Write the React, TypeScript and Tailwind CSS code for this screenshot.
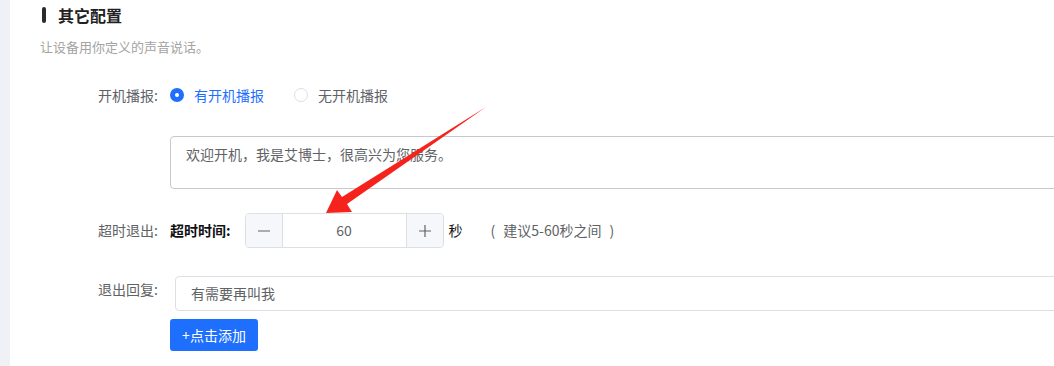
import React from "react";

export default function App() {
  return (
    <div
      className="relative flex h-[366px] w-[1054px] overflow-hidden bg-white text-[14px] text-[#606266]"
      style={{ fontFamily: '"Noto Sans CJK SC", "Noto Sans", sans-serif' }}
    >
      <div className="h-full w-[10px] shrink-0 bg-[#f0f1f6]" />
      <div className="flex flex-1 flex-col pl-[30px] pt-[4px]">
        {/* title */}
        <div className="flex h-[22px] items-center">
          <div className="ml-[2px] h-[16px] w-[4px] rounded-[2px] bg-[#2b2b2b]" />
          <div className="ml-[12px] text-[16px] font-bold leading-[22px] text-[#222]">其它配置</div>
        </div>
        <div className="mt-[11px] text-[13px] leading-[20px] text-[#a3a3a3]">让设备用你定义的声音说话。</div>

        {/* radio row */}
        <div className="mt-[28px] flex h-[20px] items-center">
          <div className="w-[130px] shrink-0 pr-[12px] text-right leading-[20px]">开机播报:</div>
          <div className="flex items-center">
            <span className="flex h-[14px] w-[14px] items-center justify-center rounded-full bg-[#1f6fff]">
              <span className="h-[4px] w-[4px] rounded-full bg-white" />
            </span>
            <span className="ml-[10px] leading-[20px] text-[#1f6fff]">有开机播报</span>
            <span className="ml-[30px] h-[14px] w-[14px] rounded-full border border-[#dcdfe6] bg-white" />
            <span className="ml-[10px] leading-[20px]">无开机播报</span>
          </div>
        </div>

        {/* textarea */}
        <div className="ml-[130px] mt-[31px] h-[53px] w-[900px] shrink-0 rounded-[4px] border border-[#c6c9d0] px-[15px] pt-[7px] leading-[20px]">
          欢迎开机，我是艾博士，很高兴为您服务。
        </div>

        {/* timeout row */}
        <div className="mt-[24px] flex h-[35px] items-center">
          <div className="w-[130px] shrink-0 pr-[12px] text-right">超时退出:</div>
          <div className="font-bold text-[#111]">超时时间:</div>
          <div className="ml-[14px] flex h-[35px] w-[199px] overflow-hidden rounded-[4px] border border-[#dcdfe6]">
            <div className="flex w-[37px] items-center justify-center border-r border-[#dcdfe6] bg-[#f5f7fa]">
              <svg width="14" height="14" viewBox="0 0 14 14">
                <line x1="1" y1="7" x2="13" y2="7" stroke="#606266" strokeWidth="1.2" />
              </svg>
            </div>
            <div className="flex flex-1 items-center justify-center text-[#606266]">60</div>
            <div className="flex w-[37px] items-center justify-center border-l border-[#dcdfe6] bg-[#f5f7fa]">
              <svg width="14" height="14" viewBox="0 0 14 14">
                <line x1="1" y1="7" x2="13" y2="7" stroke="#606266" strokeWidth="1.2" />
                <line x1="7" y1="1" x2="7" y2="13" stroke="#606266" strokeWidth="1.2" />
              </svg>
            </div>
          </div>
          <div className="ml-[5px] text-[#111]">秒</div>
          <div className="ml-[28px] flex items-center">
            <span>(</span>
            <span className="ml-[8px]">建议5-60秒之间</span>
            <span className="ml-[8px]">)</span>
          </div>
        </div>

        {/* exit reply */}
        <div className="mt-[28px] flex">
          <div className="w-[130px] shrink-0 pr-[12px] pt-[3px] text-right leading-[20px]">退出回复:</div>
          <div className="flex flex-col">
            <div className="ml-[5px] flex h-[35px] w-[900px] items-center rounded-[4px] border border-[#dcdfe6] px-[15px]">
              有需要再叫我
            </div>
            <button className="mt-[8px] flex h-[32px] w-[88px] items-center justify-center rounded-[3px] bg-[#1f6fff] text-[14px] text-white">
              +点击添加
            </button>
          </div>
        </div>
      </div>

      {/* red arrow annotation */}
      <svg className="pointer-events-none absolute left-0 top-0" width="1054" height="366" viewBox="0 0 1054 366">
        <polygon
          points="326,213 337,190 342,197 486,107 347,204 352,212"
          fill="#f5231c"
        />
      </svg>
    </div>
  );
}
